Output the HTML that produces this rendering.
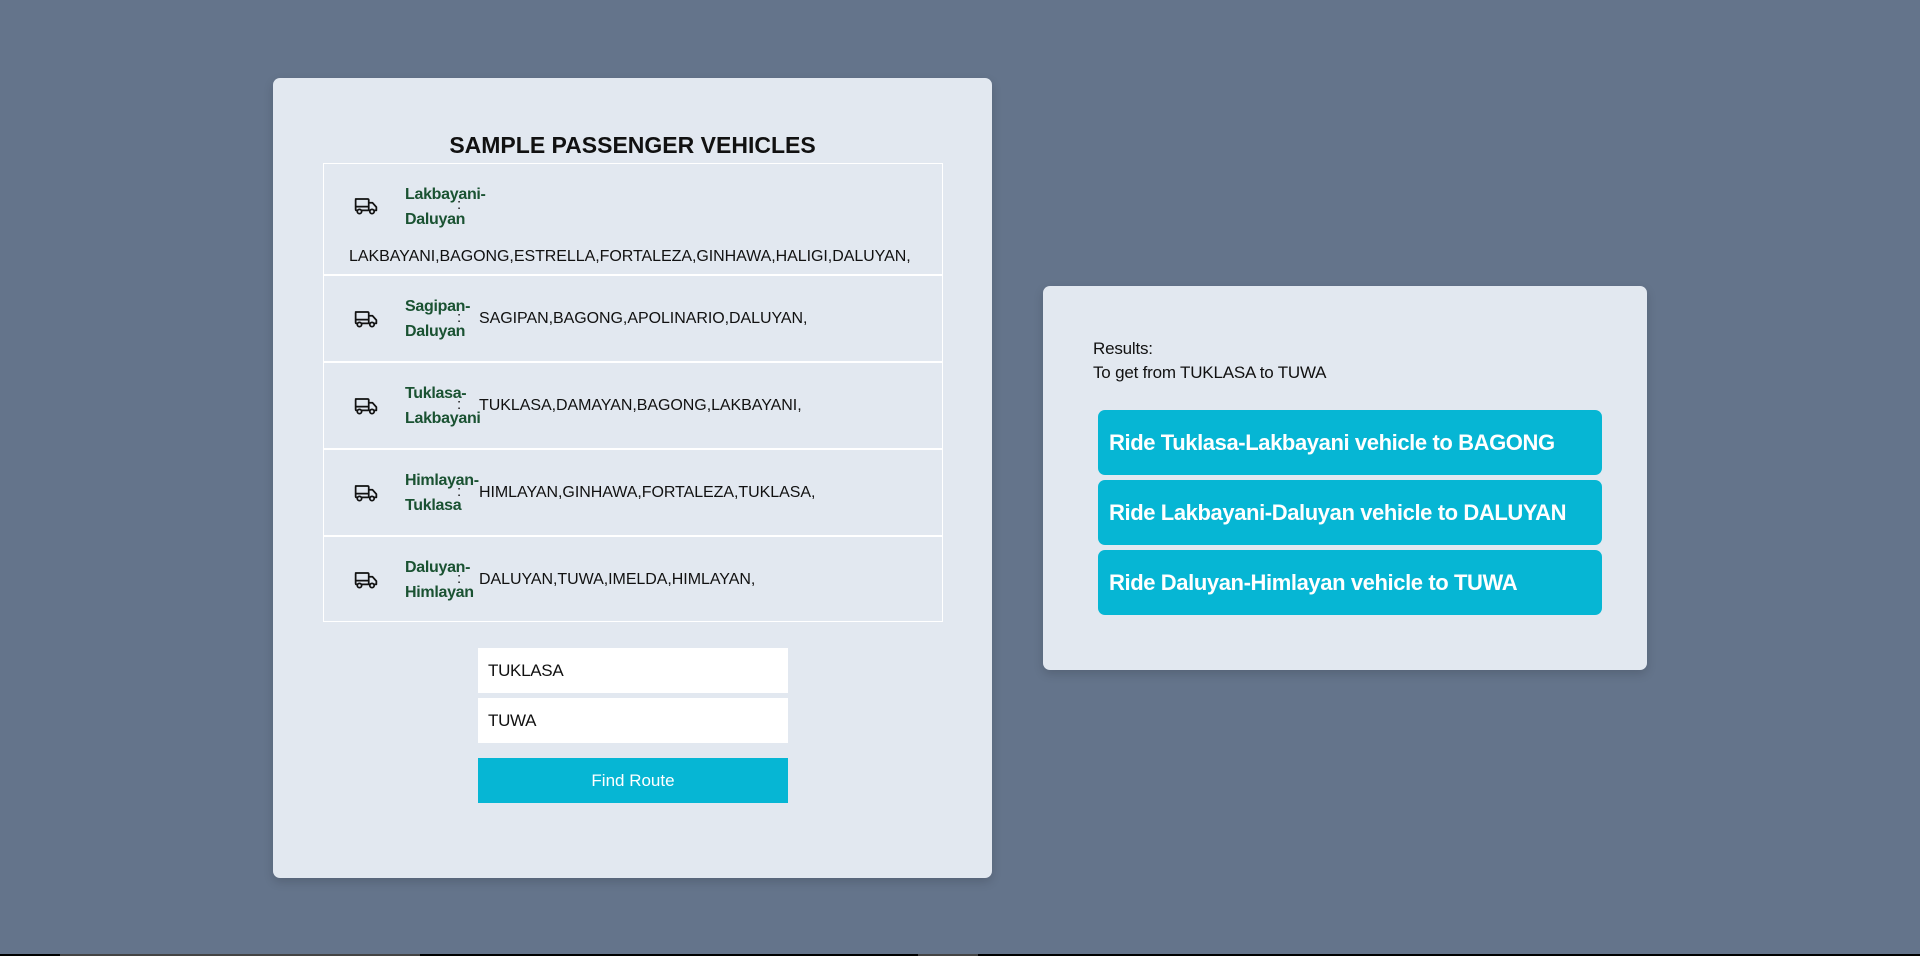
<!DOCTYPE html>
<html><head><meta charset="utf-8"><style>
*{box-sizing:border-box;margin:0;padding:0}
body{width:1920px;height:956px;background:#64748b;font-family:"Liberation Sans",sans-serif;position:relative;overflow:hidden;color:#111}
.card{position:absolute;background:#e2e8f0;border-radius:7px;box-shadow:0 4px 10px rgba(0,0,0,.15)}
h1{position:absolute;left:0;width:100%;text-align:center;top:132px;font-size:23px;font-weight:bold;color:#111}
.table{position:absolute;left:323px;top:163px;width:620px;height:459px;border:1px solid #fff}
.row{position:absolute;left:0;width:100%;border-bottom:2px solid #fff}
.ic{position:absolute;left:30px}
.nm{position:absolute;left:81px;width:80px;font-weight:bold;color:#1a5232;font-size:16px;line-height:25px;letter-spacing:-0.3px}
.col{position:absolute;left:133px;font-size:15px}
.rt{position:absolute;left:155px;font-size:16px;letter-spacing:-0.05px;white-space:nowrap}
.inp{position:absolute;left:478px;width:310px;height:45px;background:#fff;font-size:17px;padding-left:10px;line-height:45px;letter-spacing:-0.3px}
.btn{position:absolute;left:478px;top:758px;width:310px;height:45px;background:#06b6d4;color:#fff;text-align:center;line-height:45px;font-size:17px}
.res{position:absolute;left:1098px;width:504px;height:65px;background:#06b6d4;border-radius:7px;color:#fff;font-weight:bold;font-size:22px;line-height:65px;padding-left:11px;letter-spacing:-0.4px;white-space:nowrap}
.t{position:absolute;left:1093px;font-size:17px;letter-spacing:-0.2px}
</style></head><body>
<div class="card" style="left:273px;top:78px;width:719px;height:800px"></div>
<h1 style="left:273px;width:719px">SAMPLE PASSENGER VEHICLES</h1>
<svg width="0" height="0" style="position:absolute"><defs><g id="tr"><path d="M1.5 2.5h11a1 1 0 0 1 1 1V13H2.5a1 1 0 0 1-1-1V3.5a1 1 0 0 1 1-1zM13.5 6h3.5l3.5 4v3h-7zM1.5 9.5h12" fill="none" stroke="#111" stroke-width="1.6" stroke-linejoin="round"/><circle cx="5" cy="14" r="2" fill="#e2e8f0" stroke="#111" stroke-width="1.6"/><circle cx="16.5" cy="14" r="2" fill="#e2e8f0" stroke="#111" stroke-width="1.6"/></g></defs></svg>
<div class="table">
 <div class="row" style="top:0;height:112px">
  <svg class="ic" style="top:32px" width="24" height="19" viewBox="0 0 22 17"><use href="#tr"/></svg>
  <div class="nm" style="top:18px">Lakbayani-<br>Daluyan</div>
  <div class="col" style="top:32px">:</div>
  <div class="rt" style="left:25px;top:84px">LAKBAYANI,BAGONG,ESTRELLA,FORTALEZA,GINHAWA,HALIGI,DALUYAN,</div>
 </div>
 <div class="row" style="top:112px;height:87px">
  <svg class="ic" style="top:33px" width="24" height="19" viewBox="0 0 22 17"><use href="#tr"/></svg>
  <div class="nm" style="top:18px">Sagipan-<br>Daluyan</div>
  <div class="col" style="top:33px">:</div>
  <div class="rt" style="top:34px">SAGIPAN,BAGONG,APOLINARIO,DALUYAN,</div>
 </div>
 <div class="row" style="top:199px;height:87px">
  <svg class="ic" style="top:33px" width="24" height="19" viewBox="0 0 22 17"><use href="#tr"/></svg>
  <div class="nm" style="top:18px">Tuklasa-<br>Lakbayani</div>
  <div class="col" style="top:33px">:</div>
  <div class="rt" style="top:34px">TUKLASA,DAMAYAN,BAGONG,LAKBAYANI,</div>
 </div>
 <div class="row" style="top:286px;height:87px">
  <svg class="ic" style="top:33px" width="24" height="19" viewBox="0 0 22 17"><use href="#tr"/></svg>
  <div class="nm" style="top:18px">Himlayan-<br>Tuklasa</div>
  <div class="col" style="top:33px">:</div>
  <div class="rt" style="top:34px">HIMLAYAN,GINHAWA,FORTALEZA,TUKLASA,</div>
 </div>
 <div class="row" style="top:373px;height:86px;border-bottom:none">
  <svg class="ic" style="top:33px" width="24" height="19" viewBox="0 0 22 17"><use href="#tr"/></svg>
  <div class="nm" style="top:18px">Daluyan-<br>Himlayan</div>
  <div class="col" style="top:33px">:</div>
  <div class="rt" style="top:34px">DALUYAN,TUWA,IMELDA,HIMLAYAN,</div>
 </div>
</div>
<div class="inp" style="top:648px">TUKLASA</div>
<div class="inp" style="top:698px">TUWA</div>
<div class="btn">Find Route</div>

<div class="card" style="left:1043px;top:286px;width:604px;height:384px"></div>
<div class="t" style="top:339px">Results:</div>
<div class="t" style="top:363px">To get from TUKLASA to TUWA</div>
<div class="res" style="top:410px">Ride Tuklasa-Lakbayani vehicle to BAGONG</div>
<div class="res" style="top:480px">Ride Lakbayani-Daluyan vehicle to DALUYAN</div>
<div class="res" style="top:550px">Ride Daluyan-Himlayan vehicle to TUWA</div>
<div style="position:absolute;left:0;top:954px;width:1920px;height:2px;background:#000"></div>
<div style="position:absolute;left:60px;top:954px;width:360px;height:2px;background:#444"></div>
<div style="position:absolute;left:918px;top:954px;width:60px;height:2px;background:#444"></div>
</body></html>
